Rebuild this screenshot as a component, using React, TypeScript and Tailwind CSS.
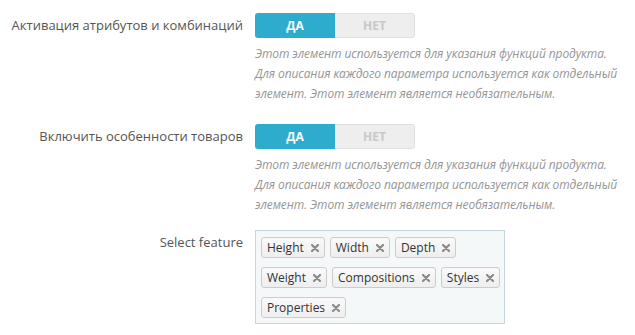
import React from 'react';

const HELP = [
  'Этот элемент используется для указания функций продукта.',
  'Для описания каждого параметра используется как отдельный',
  'элемент. Этот элемент является необязательным.',
];

const Toggle: React.FC = () => (
  <div className="flex h-[25px] w-[160px] rounded-[3px] overflow-hidden">
    <div className="flex w-1/2 items-center justify-center bg-[#2eacce] text-[12px] font-bold text-white">ДА</div>
    <div className="flex w-1/2 items-center justify-center bg-[#eeeeee] border border-l-0 border-[#e0e0e0] rounded-r-[3px] text-[12px] font-bold text-[#c8c8c8]">
      НЕТ
    </div>
  </div>
);

const Help: React.FC = () => (
  <div className="mt-[6px] whitespace-nowrap text-[12px] italic leading-[20px] tracking-[-0.1px] text-[#959595]">
    {HELP.map((l) => (
      <div key={l}>{l}</div>
    ))}
  </div>
);

const Tag: React.FC<{ label: string }> = ({ label }) => (
  <div className="flex h-[21px] items-center gap-[7px] rounded-[3px] border border-[#cccccc] bg-gradient-to-b from-[#fafafa] to-[#eeeeee] pl-[5px] pr-[5px] text-[12px] text-[#333]">
    <span>{label}</span>
    <svg width="8" height="8" viewBox="0 0 8 8">
      <path d="M1 1L7 7M7 1L1 7" stroke="#8a8a8a" strokeWidth="2.2" strokeLinecap="round" />
    </svg>
  </div>
);

const Row: React.FC<{ label: string; children: React.ReactNode }> = ({ label, children }) => (
  <div className="flex">
    <div className="w-[243px] shrink-0 text-right text-[13px] leading-[25px] text-[#555]">{label}</div>
    <div className="ml-[12px]">{children}</div>
  </div>
);

export default function App() {
  return (
    <div className="h-[335px] w-[635px] overflow-hidden bg-white pt-[13px]" style={{ fontFamily: '"Open Sans", sans-serif' }}>
      <Row label="Активация атрибутов и комбинаций">
        <Toggle />
        <Help />
      </Row>
      <div className="mt-[20px]">
        <Row label="Включить особенности товаров">
          <Toggle />
          <Help />
        </Row>
      </div>
      <div className="mt-[15px]">
        <Row label="Select feature">
          <div className="flex w-[250px] flex-wrap gap-x-[5px] gap-y-[9px] border border-[#c7d6db] bg-[#f5f8f9] pl-[5px] pr-0 pt-[6px] pb-[5px]">
            {['Height', 'Width', 'Depth', 'Weight', 'Compositions', 'Styles', 'Properties'].map((t) => (
              <Tag key={t} label={t} />
            ))}
          </div>
        </Row>
      </div>
    </div>
  );
}
